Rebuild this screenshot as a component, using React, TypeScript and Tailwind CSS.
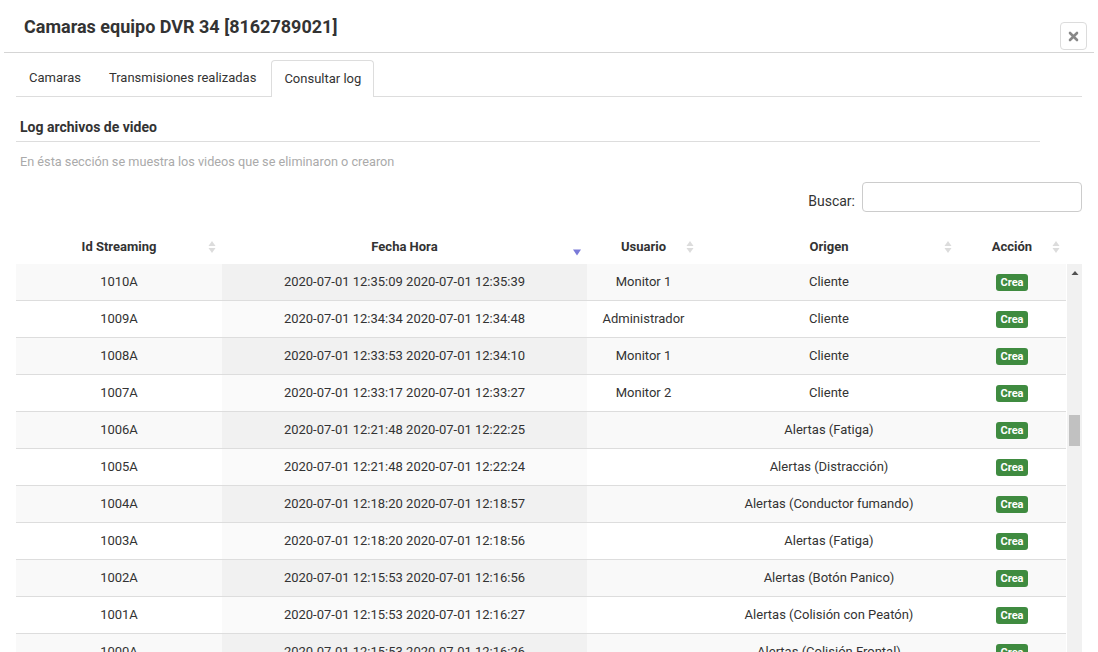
import React from "react";

const rows: [string, string, string, string][] = [
  ["1010A", "2020-07-01 12:35:09 2020-07-01 12:35:39", "Monitor 1", "Cliente"],
  ["1009A", "2020-07-01 12:34:34 2020-07-01 12:34:48", "Administrador", "Cliente"],
  ["1008A", "2020-07-01 12:33:53 2020-07-01 12:34:10", "Monitor 1", "Cliente"],
  ["1007A", "2020-07-01 12:33:17 2020-07-01 12:33:27", "Monitor 2", "Cliente"],
  ["1006A", "2020-07-01 12:21:48 2020-07-01 12:22:25", "", "Alertas (Fatiga)"],
  ["1005A", "2020-07-01 12:21:48 2020-07-01 12:22:24", "", "Alertas (Distracción)"],
  ["1004A", "2020-07-01 12:18:20 2020-07-01 12:18:57", "", "Alertas (Conductor fumando)"],
  ["1003A", "2020-07-01 12:18:20 2020-07-01 12:18:56", "", "Alertas (Fatiga)"],
  ["1002A", "2020-07-01 12:15:53 2020-07-01 12:16:56", "", "Alertas (Botón Panico)"],
  ["1001A", "2020-07-01 12:15:53 2020-07-01 12:16:27", "", "Alertas (Colisión con Peatón)"],
  ["1000A", "2020-07-01 12:15:53 2020-07-01 12:16:26", "", "Alertas (Colisión Frontal)"],
];

function SortBoth() {
  return (
    <svg width="8" height="18" viewBox="0 0 8 18" className="absolute right-[6px] top-1/2 -translate-y-1/2">
      <path d="M4 3 L7.5 8 L0.5 8 Z" fill="#dcdcdc" />
      <path d="M4 15 L7.5 10 L0.5 10 Z" fill="#dcdcdc" />
    </svg>
  );
}

function SortDesc() {
  return (
    <svg width="10" height="18" viewBox="0 0 10 18" className="absolute right-[5px] top-[16px]">
      <path d="M1 4.5 L9 4.5 L5 10.5 Z" fill="#7a7ad8" />
    </svg>
  );
}

export default function App() {
  return (
    <div
      className="w-[1098px] h-[652px] overflow-hidden bg-white text-[#333]"
      style={{ fontFamily: "Roboto, 'Liberation Sans', sans-serif" }}
    >
      {/* Header */}
      <div className="mx-[4px] h-[53px] border-b border-[#d5d5d5] flex items-start justify-between">
        <h4 className="pl-[20px] pt-[15px] text-[18px] leading-[24px] font-bold text-[#333]">
          Camaras equipo DVR 34 [8162789021]
        </h4>
        <button className="mt-[22px] mr-[7px] w-[27px] h-[28px] border border-[#dcdcdc] rounded-[4px] bg-white flex items-center justify-center">
          <svg width="11" height="11" viewBox="0 0 11 11">
            <path d="M2 2 L9 9 M9 2 L2 9" stroke="#888" strokeWidth="2.6" strokeLinecap="round" />
          </svg>
        </button>
      </div>

      <div className="px-[16px]">
        {/* Tabs */}
        <div className="mt-[7px] flex border-b border-[#ddd] h-[37px] text-[13px]">
          <div className="px-[13px] h-[36px] flex items-center mr-[2px]">Camaras</div>
          <div className="px-[13px] h-[36px] flex items-center mr-[2px]">Transmisiones realizadas</div>
          <div className="px-[12px] h-[37px] flex items-center border border-b-0 border-[#ddd] rounded-t-[4px] bg-white mb-[-1px] pb-[1px]">
            Consultar log
          </div>
        </div>

        {/* Section title */}
        <div className="w-[1024px] mt-[20px] border-b border-[#ddd] pb-[4px] pl-[4px] text-[14px] leading-[20px] font-bold">
          Log archivos de video
        </div>
        <div className="pl-[4px] mt-[10px] text-[12.7px] leading-[20px] text-[#aaa]">
          En ésta sección se muestra los videos que se eliminaron o crearon
        </div>

        {/* Search */}
        <div className="mt-[10px] flex justify-end items-center">
          <span className="text-[14px] mr-[7px] mt-[8px]">Buscar:</span>
          <div className="w-[220px] h-[30px] border border-[#ccc] rounded-[4px]" />
        </div>

        {/* Table header */}
        <div className="mt-[17px] flex text-[13px] font-bold h-[35px] items-center w-[1050px]">
          <div className="relative w-[206px] h-full flex items-center justify-center">
            Id Streaming
            <SortBoth />
          </div>
          <div className="relative w-[365px] h-full flex items-center justify-center">
            Fecha Hora
            <SortDesc />
          </div>
          <div className="relative w-[113px] h-full flex items-center justify-center">
            Usuario
            <SortBoth />
          </div>
          <div className="relative w-[258px] h-full flex items-center justify-center">
            Origen
            <SortBoth />
          </div>
          <div className="relative w-[108px] h-full flex items-center justify-center">
            Acción
            <SortBoth />
          </div>
        </div>

        {/* Body with scrollbar */}
        <div className="flex">
          <div className="w-[1050px] text-[13px]">
            {rows.map((r, i) => {
              const odd = i % 2 === 0;
              return (
                <div
                  key={r[0]}
                  className={`flex h-[37px] border-b border-[#ddd] ${odd ? "bg-[#f9f9f9]" : "bg-white"}`}
                >
                  <div className="w-[206px] flex items-center justify-center">{r[0]}</div>
                  <div
                    className={`w-[365px] flex items-center justify-center ${odd ? "bg-[#f1f1f1]" : "bg-[#fafafa]"}`}
                  >
                    {r[1]}
                  </div>
                  <div className="w-[113px] flex items-center justify-center">{r[2]}</div>
                  <div className="w-[258px] flex items-center justify-center">{r[3]}</div>
                  <div className="w-[108px] flex items-center justify-center">
                    <span className="bg-[#3f8b40] text-white text-[11px] font-bold leading-[17px] px-[5px] rounded-[3px]">
                      Crea
                    </span>
                  </div>
                </div>
              );
            })}
          </div>
          <div className="w-[16px] ml-[1px] bg-[#f1f1f1] flex flex-col items-center h-[400px]">
            <svg width="8" height="6" viewBox="0 0 8 6" className="mt-[6px]">
              <path d="M4 1 L7.5 5 L0.5 5 Z" fill="#505050" />
            </svg>
            <div className="mt-[139px] w-[11px] h-[31px] bg-[#c1c1c1]" />
          </div>
        </div>
      </div>
    </div>
  );
}
